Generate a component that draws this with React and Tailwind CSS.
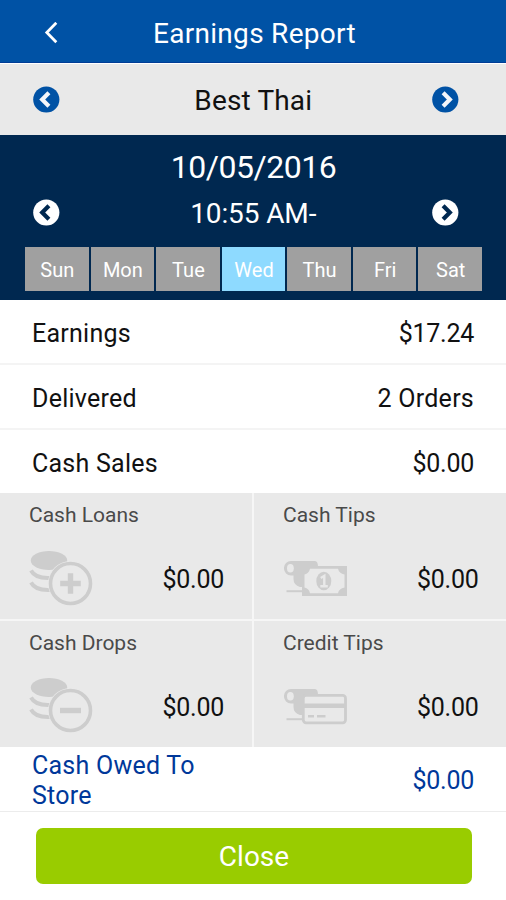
import React from 'react';

const days = ['Sun', 'Mon', 'Tue', 'Wed', 'Thu', 'Fri', 'Sat'];
const selectedDay = 'Wed';

const rows = [
  { label: 'Earnings', value: '$17.24' },
  { label: 'Delivered', value: '2 Orders' },
  { label: 'Cash Sales', value: '$0.00' },
];

function CircleArrow({ dir, className, arrow }) {
  return (
    <button aria-label={dir === 'left' ? 'Previous' : 'Next'} className="block">
      <svg width="27" height="27" viewBox="0 0 27 27" className={className}>
        <circle cx="13.3" cy="13.5" r="13.1" fill="currentColor" />
        <path
          d={dir === 'left' ? 'M15.9 6.8 L9.2 13.5 L15.9 20.2' : 'M11.1 6.8 L17.8 13.5 L11.1 20.2'}
          fill="none"
          stroke={arrow}
          strokeWidth="4.2"
        />
      </svg>
    </button>
  );
}

function CoinsIcon({ minus }) {
  return (
    <svg
      width="64"
      height="58"
      viewBox="0 0 64 58"
      fill="none"
      stroke="#cdcdcd"
      className={minus ? '-mt-[2px]' : ''}
    >
      <ellipse cx="20" cy="10.5" rx="18.2" ry="9.5" fill="#cdcdcd" stroke="none" />
      <path d="M2 20.5 C5 26 11.5 28.5 21 28" strokeWidth="4" />
      <path d="M2 32.5 C5 38 11.5 40.5 21 40" strokeWidth="4" />
      <circle cx="41.5" cy="33.5" r="22.5" fill="#e9e9e9" stroke="none" />
      <circle cx="41.5" cy="33.5" r="20" strokeWidth="3.6" />
      <path d={minus ? 'M31 33.5 H52' : 'M31.2 33.5 H51.8 M41.5 23.2 V43.8'} strokeWidth="5.4" />
    </svg>
  );
}

// hand shape that sits behind the bill and the card
function Hand() {
  return (
    <>
      <path d="M7 0 H31 Q34 0 34 6 H20 V26 H16 Q9.5 24 9.5 18 V14.5 H7 A7 7.2 0 0 1 7 0 Z" fill="#cdcdcd" />
      <ellipse cx="6.4" cy="7.3" rx="3.4" ry="4.3" fill="#e9e9e9" />
      <path d="M2.5 30.2 H19" stroke="#cdcdcd" strokeWidth="2" />
    </>
  );
}

function BillIcon() {
  return (
    <svg width="64" height="36" viewBox="0 0 64 36" fill="none" className="ml-[1px]">
      <Hand />
      <rect x="18" y="5" width="45" height="30" fill="#cdcdcd" />
      <path d="M26 7.8 H54 Q55 12.5 60.5 13.5 V26.5 Q55 27.5 54 32.2 H26 Q25 27.5 20.5 26.5 V13.5 Q25 12.5 26 7.8 Z" fill="#e9e9e9" />
      <ellipse cx="39.8" cy="20" rx="7.5" ry="9.3" fill="#cdcdcd" />
      <path d="M36.8 17 L40.3 14.8 V25 M36.3 25.2 H43.8" stroke="#e9e9e9" strokeWidth="2.4" />
    </svg>
  );
}

function CardIcon() {
  return (
    <svg width="64" height="36" viewBox="0 0 64 36" fill="none" className="ml-[1px]">
      <Hand />
      <rect x="19.3" y="6.4" width="42.2" height="27.4" rx="2.8" fill="#e9e9e9" stroke="#cdcdcd" strokeWidth="2.8" />
      <path d="M19 16.7 H62" stroke="#cdcdcd" strokeWidth="4.6" />
      <path d="M24 27.3 H30 M33 27.3 H41.5" stroke="#cdcdcd" strokeWidth="2.6" />
    </svg>
  );
}

function Tile({ label, icon }) {
  return (
    <div className="bg-[#e9e9e9] h-[126px] pl-[29px] pr-[27.5px] pt-[9px]">
      <div className="text-[21px] leading-[26px] text-[#4a4a4a]">{label}</div>
      <div className="flex items-center justify-between h-[62px] mt-[20px]">
        {icon}
        <span className="text-[25px] tracking-[-0.25px] pt-[2px]">$0.00</span>
      </div>
    </div>
  );
}

export default function App() {
  return (
    <div className="w-[506px] h-[900px] bg-white text-[#111] font-['Roboto',sans-serif] overflow-hidden">
      <header className="h-[63px] bg-[#0052a5] border-b border-[#003d96] flex items-center pt-[3px] text-white">
        <button aria-label="Back" className="w-[58px] pl-[44px]">
          <svg width="14" height="22" viewBox="0 0 14 22" fill="none" stroke="#fff" strokeWidth="2.8">
            <path d="M12.3 0.8 L2.8 10.5 L12.3 20.2" />
          </svg>
        </button>
        <h1 className="flex-1 text-center pr-[55px] pt-[2px] text-[28px] tracking-[0.3px]">Earnings Report</h1>
      </header>

      <div className="h-[72px] bg-[#e9e9e9] border-t border-white flex items-center pl-[32.5px] pr-[47px]">
        <CircleArrow dir="left" className="text-[#0052a5]" arrow="#f4f6fa" />
        <span className="flex-1 text-center pl-[15px] text-[28px] tracking-[0.15px] pt-[2px]">Best Thai</span>
        <CircleArrow dir="right" className="text-[#0052a5]" arrow="#f4f6fa" />
      </div>

      <section className="h-[165px] bg-[#002850] text-white pt-[12px]">
        <div className="text-center text-[32px] leading-[40px] tracking-[-0.5px] pl-[1px]">10/05/2016</div>
        <div className="flex items-center pl-[32.5px] pr-[47px] h-[40px] mt-[5px]">
          <CircleArrow dir="left" className="text-white" arrow="#002850" />
          <span className="flex-1 text-center pl-[15px] pt-[3px] text-[28px] tracking-[-0.1px]">10:55 AM-</span>
          <CircleArrow dir="right" className="text-white" arrow="#002850" />
        </div>
        <div className="grid grid-cols-7 gap-[2px] mt-[15px] ml-[25px] mr-[24px]">
          {days.map((day) => (
            <div
              key={day}
              className={`h-[44px] flex items-center justify-center pt-[2px] pl-[1px] text-[20px] ${
                day === selectedDay ? 'bg-[#8edaff]' : 'bg-[#a0a0a0]'
              }`}
            >
              {day}
            </div>
          ))}
        </div>
      </section>

      {rows.map((row, i) => (
        <div
          key={row.label}
          className={`flex items-center justify-between px-8 pt-[4px] text-[25px] tracking-[0.25px] ${
            i < 2 ? 'h-[65px] border-b-2 border-[#f4f4f4]' : 'h-[63px]'
          }`}
        >
          <span>{row.label}</span>
          <span className={row.value[0] === '$' ? 'tracking-[-0.25px]' : ''}>{row.value}</span>
        </div>
      ))}

      <div className="grid grid-cols-[251.5px_252px] gap-x-[2.5px] gap-y-[2px] bg-[#f6f6f6]">
        <Tile label="Cash Loans" icon={<CoinsIcon />} />
        <Tile label="Cash Tips" icon={<BillIcon />} />
        <Tile label="Cash Drops" icon={<CoinsIcon minus />} />
        <Tile label="Credit Tips" icon={<CardIcon />} />
      </div>

      <div className="h-[65px] border-b border-[#ececec] flex items-center justify-between px-8 pt-[4px] text-[25px] leading-[30px] tracking-[0.25px] text-[#00389a]">
        <span className="w-[180px]">Cash Owed To Store</span>
        <span className="tracking-[-0.25px]">$0.00</span>
      </div>

      <button className="block w-[436px] h-[56px] mt-[16px] ml-[36px] pt-[2px] rounded-[7px] bg-[#99cc00] text-white text-[28px]">
        Close
      </button>
    </div>
  );
}
